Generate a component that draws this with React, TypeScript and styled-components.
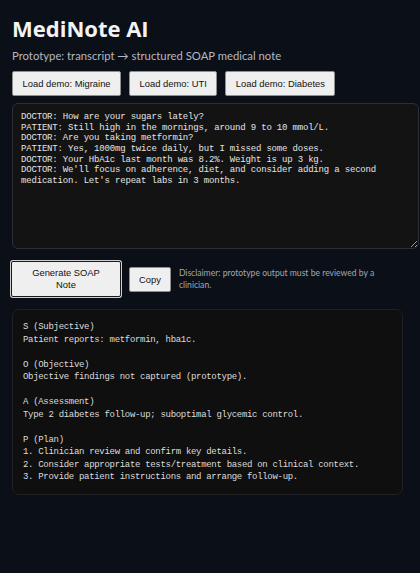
import React, { useState } from "react";
import styled, { createGlobalStyle } from "styled-components";

const GlobalStyle = createGlobalStyle`
  html, body {
    margin: 0;
    padding: 0;
    background: #0b0f17;
  }
  body {
    font-family: "Open Sans", "Noto Sans", sans-serif;
    color: #e8eaee;
  }
`;

const Page = styled.div`
  padding: 12px 12px 40px;
  min-height: 573px;
  box-sizing: border-box;
  background: #0b0f17;
  overflow: hidden;
`;

const Title = styled.h1`
  margin: 0;
  padding-top: 2px;
  font-size: 22px;
  line-height: 28px;
  font-weight: 700;
  color: #f2f3f5;
`;

const Subtitle = styled.p`
  margin: 5px 0 0;
  font-family: Lato, "Open Sans", sans-serif;
  font-size: 11.3px;
  line-height: 17px;
  color: #b4b8c0;
`;

const DemoRow = styled.div`
  display: flex;
  gap: 8px;
  margin-top: 7px;
`;

const Button = styled.button`
  font-family: "Liberation Sans", Arial, sans-serif;
  font-size: 9.4px;
  color: #111;
  background: #efefef;
  border: 1px solid #8f8f8f;
  border-radius: 2px;
  padding: 0 9.5px;
  height: 25px;
  cursor: pointer;
`;

const Transcript = styled.textarea`
  display: block;
  margin-top: 7px;
  width: calc(100% - 7px);
  height: 128px;
  padding: 8px;
  box-sizing: content-box;
  background: #131313;
  color: #e4e4e4;
  border: 1px solid #2b2e34;
  border-radius: 6px;
  font-family: "Liberation Mono", "DejaVu Sans Mono", monospace;
  font-size: 9px;
  letter-spacing: -0.18px;
  line-height: 10.67px;
  resize: vertical;
  outline: none;
`;

const ActionRow = styled.div`
  display: flex;
  align-items: center;
  gap: 8px;
  margin-top: 12px;
`;

const PrimaryButton = styled(Button)`
  width: 110px;
  height: 36px;
  margin-left: -1px;
  padding: 0 15px;
  line-height: 12.5px;
  border: 1px solid #1a1a1a;
  box-shadow: 0 0 0 1px #d0d0d0;
`;

const CopyButton = styled(Button)`
  height: 25px;
  padding: 0 9px;
`;

const Disclaimer = styled.span`
  font-family: Lato, "Open Sans", sans-serif;
  font-size: 8.6px;
  line-height: 12px;
  color: #a3a8b0;
  max-width: 200px;
`;

const Output = styled.pre`
  margin: 12px 0 0;
  width: calc(100% - 5px);
  box-sizing: border-box;
  padding: 11px 10px 10px;
  background: #0f0f0f;
  border: 1px solid #1f2124;
  border-radius: 7px;
  color: #dcdcdc;
  font-family: "Liberation Mono", "DejaVu Sans Mono", monospace;
  font-size: 9px;
  letter-spacing: -0.31px;
  line-height: 12.5px;
  white-space: pre-wrap;
`;

const transcript = `DOCTOR: How are your sugars lately?
PATIENT: Still high in the mornings, around 9 to 10 mmol/L.
DOCTOR: Are you taking metformin?
PATIENT: Yes, 1000mg twice daily, but I missed some doses.
DOCTOR: Your HbA1c last month was 8.2%. Weight is up 3 kg.
DOCTOR: We'll focus on adherence, diet, and consider adding a second medication. Let's repeat labs in 3 months.`;

const soap = `S (Subjective)
Patient reports: metformin, hba1c.

O (Objective)
Objective findings not captured (prototype).

A (Assessment)
Type 2 diabetes follow-up; suboptimal glycemic control.

P (Plan)
1. Clinician review and confirm key details.
2. Consider appropriate tests/treatment based on clinical context.
3. Provide patient instructions and arrange follow-up.`;

const demos = ["Migraine", "UTI", "Diabetes"];

export default function App() {
  const [text, setText] = useState(transcript);
  return (
    <>
      <GlobalStyle />
      <Page>
        <Title>MediNote AI</Title>
        <Subtitle>Prototype: transcript → structured SOAP medical note</Subtitle>
        <DemoRow>
          {demos.map((d) => (
            <Button key={d}>Load demo: {d}</Button>
          ))}
        </DemoRow>
        <Transcript value={text} onChange={(e) => setText(e.target.value)} spellCheck={false} />
        <ActionRow>
          <PrimaryButton>Generate SOAP Note</PrimaryButton>
          <CopyButton>Copy</CopyButton>
          <Disclaimer>Disclaimer: prototype output must be reviewed by a clinician.</Disclaimer>
        </ActionRow>
        <Output>{soap}</Output>
      </Page>
    </>
  );
}
